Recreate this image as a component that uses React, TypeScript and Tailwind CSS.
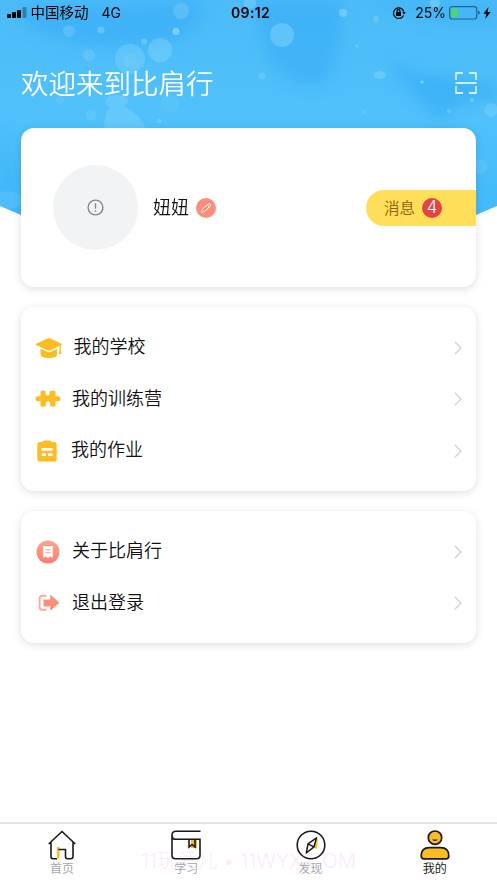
import type { ReactNode } from 'react';

const yellow = '#fbbc24';
const ink = '#1b1b1f';

// soft watercolor wash behind the header
const HeaderArt = () => (
  <svg className="absolute left-0 top-0 h-[216px] w-full" viewBox="0 0 497 216" preserveAspectRatio="none">
    <defs>
      <clipPath id="wave">
        <path d="M0 0H497V206L476 215H21L0 206Z" />
      </clipPath>
      <linearGradient id="sky" x1="0" y1="0" x2="0" y2="1">
        <stop offset="0" stopColor="#4cbcf8" />
        <stop offset="0.55" stopColor="#50c1fa" />
        <stop offset="1" stopColor="#42b9fb" />
      </linearGradient>
      <filter id="soft" x="-30%" y="-30%" width="160%" height="160%">
        <feGaussianBlur stdDeviation="7" />
      </filter>
    </defs>
    <g clipPath="url(#wave)">
      <rect width="497" height="216" fill="url(#sky)" />
      <g filter="url(#soft)" fill="#36acf6">
        <path d="M20 8C60 0 130 12 200 0C208 20 190 42 150 46C100 52 55 42 20 22Z" opacity="0.6" />
        <path d="M252 0H340C346 30 336 60 326 82C304 92 284 76 266 58Z" opacity="0.55" />
        <path d="M385 60C410 74 425 72 497 84V104C470 88 455 112 438 120C422 102 405 86 385 60Z" opacity="0.65" />
        <path d="M370 0H497V26C460 30 410 20 370 0Z" opacity="0.4" />
        <path d="M0 120C8 150 20 170 22 216H0Z" opacity="0.3" />
      </g>
      <g fill="#8ad6fb">
        <circle cx="130" cy="59" r="15" opacity="0.35" />
        <circle cx="130" cy="60" r="7" opacity="0.15" />
        <circle cx="160" cy="50" r="12" opacity="0.4" />
        <path d="M106 103a11 6 0 0 1 22-4q1 4-4 8c10 3 17 11 22 22h-42c0-10 2-18 7-22q-5-1-5-4Z" opacity="0.35" />
        <circle cx="282" cy="35" r="12" opacity="0.45" />
        <circle cx="181" cy="11" r="8" opacity="0.3" />
        <circle cx="176" cy="31.500" r="3.500" opacity="0.8" />
        <circle cx="144" cy="41.500" r="3" opacity="0.5" />
        <circle cx="69" cy="31" r="6" opacity="0.3" />
        <circle cx="101" cy="30" r="3.500" opacity="0.5" />
        <circle cx="89" cy="55" r="6" opacity="0.3" />
        <circle cx="170" cy="103" r="9" opacity="0.15" />
        <circle cx="60" cy="100" r="4.500" opacity="0.2" />
        <circle cx="91" cy="115" r="5.500" opacity="0.2" />
        <circle cx="159" cy="121" r="2.500" opacity="0.5" />
        <circle cx="343" cy="13" r="4" opacity="0.6" />
        <circle cx="376" cy="19" r="3" opacity="0.4" />
        <circle cx="250" cy="3" r="6" opacity="0.4" />
        <circle cx="435" cy="3" r="5" opacity="0.5" />
        <ellipse cx="380" cy="75" rx="6" ry="4" opacity="0.45" />
        <circle cx="262" cy="76" r="3.500" opacity="0.35" />
        <circle cx="422" cy="82" r="1.500" />
        <circle cx="357" cy="46" r="1.500" opacity="0.6" />
        <circle cx="364" cy="112" r="2.500" opacity="0.3" />
        <circle cx="449" cy="111" r="2" opacity="0.5" />
        <circle cx="472" cy="100" r="2" opacity="0.6" />
        <circle cx="491" cy="110" r="7" opacity="0.35" />
        <circle cx="480" cy="167" r="7" opacity="0.2" />
        <ellipse cx="8" cy="200" rx="14" ry="9" opacity="0.2" />
      </g>
    </g>
  </svg>
);

const StatusBar = () => (
  <div className="relative flex h-[26px] items-center text-[14.500px] text-black">
    <svg className="ml-[7px]" width="20" height="12" viewBox="0 0 20 12">
      <rect x="0" y="7" width="4" height="4" rx="1" />
      <rect x="5" y="5" width="4" height="6" rx="1" />
      <rect x="10" y="3" width="4" height="8" rx="1" />
      <rect x="15.500" y="0" width="4" height="11" rx="1" opacity="0.3" />
    </svg>
    <span className="-mt-px ml-[3.500px] leading-none">中国移动</span>
    <span className="-mt-px ml-[13px] font-['Inter'] text-[14px]">4G</span>
    <span className="absolute left-[231px] top-[2px] font-['Inter'] text-[14px] font-semibold tracking-[0.35px]">09:12</span>
    <div className="-mt-px ml-auto flex items-center">
      <svg width="14" height="14" viewBox="0 0 14 14" fill="none" stroke="#000" strokeWidth="1.200">
        <path d="M11.500 9.500A5.300 5.300 0 1 1 11.800 5.500" />
        <path d="M10.200 6h3.600l-1.800 2.500Z" fill="#000" stroke="none" />
        <rect x="4" y="6" width="5" height="4" rx=".5" fill="#000" stroke="none" />
        <path d="M5 6.500V5.200a1.500 1.500 0 0 1 3 0V6.500" />
      </svg>
      <span className="ml-[9px] font-['Inter'] text-[14px]">25%</span>
      <svg className="ml-[3px]" width="32" height="14" viewBox="0 0 32 14">
        <rect x="0.700" y="0.700" width="27" height="12.300" rx="2.500" fill="none" stroke="#25658a" strokeWidth="1.200" />
        <rect x="2.500" y="2.500" width="6" height="8.800" rx="0.800" fill="#4cd964" />
        <path d="M29 4.800q2 .4 2 2t-2 2Z" fill="#25658a" />
      </svg>
      <svg className="ml-[2px] mr-[6px]" width="8" height="12" viewBox="0 0 8 12">
        <path d="M5.500 0L0.500 6.700H3.400L2.200 12L7.600 4.900H4.500Z" />
      </svg>
    </div>
  </div>
);

const CapIcon = () => (
  <svg width="28" height="22" viewBox="0 0 28 22" fill={yellow}>
    <path d="M14 1Q14.500 1 15 1.300L26.500 6.700Q27.500 7.300 26.500 7.900L15 13.400Q14 13.900 13 13.400L1 7.900Q0 7.300 1 6.700L13 1.300Q13.500 1 14 1Z" />
    <path d="M5.500 11.500L12.800 15Q14 15.500 15.200 15L22 11.700V17.500Q22 21 14 21Q5.500 21 5.500 17.500Z" />
    <path d="M24.500 8.500H25.900V13.500L26.800 17H23.600L24.500 13.500Z" />
  </svg>
);

const PuzzleIcon = () => (
  <svg width="26" height="18" viewBox="0 0 26 18" fill={yellow}>
    <path d="M5.500 1.500Q5.500.7 6.300.7H10.500V3.500A2 2 0 0 0 14.700 3.500V.7H19.700Q20.500.7 20.500 1.500V6.200H23A2.500 2.500 0 0 1 23 11.200H20.500V15.700Q20.500 16.500 19.700 16.500H15.200V13.500A2.200 2.200 0 0 0 10.700 13.500V16.500H6.300Q5.500 16.500 5.500 15.700V11.200H3A2.500 2.500 0 0 1 3 6.200H5.500Z" />
  </svg>
);

const ClipboardIcon = () => (
  <svg width="20" height="22" viewBox="0 0 20 22" fill={yellow}>
    <path d="M3 2H5Q6 .4 7.500.4H12.500Q14 .4 15 2H17Q19.700 2 19.700 4.700V18.700Q19.700 21.500 17 21.500H3Q.3 21.500.3 18.700V4.700Q.3 2 3 2Z" />
    <g fill="#fff">
      <rect x="4.500" y="8" width="11" height="2.800" rx="0.600" />
      <rect x="4.500" y="13.200" width="4.500" height="2.800" rx="0.600" />
      <rect x="11" y="13.200" width="4.500" height="2.800" rx="0.600" />
    </g>
  </svg>
);

const AboutIcon = () => (
  <svg width="24" height="24" viewBox="0 0 24 24">
    <defs>
      <linearGradient id="coral" x1="0" y1="0" x2="0" y2="1">
        <stop offset="0" stopColor="#fda491" />
        <stop offset="1" stopColor="#fa7f70" />
      </linearGradient>
    </defs>
    <circle cx="12" cy="12" r="11.500" fill="url(#coral)" />
    <path d="M7.300 6H16.700V17.800L14.300 16.500L12 18L9.700 16.500L7.300 17.800Z" fill="#fff" />
    <path d="M9.500 9.700H14.500M9.500 12.700H14.500" stroke="#fb9482" strokeWidth="1.100" />
  </svg>
);

const LogoutIcon = () => (
  <svg width="22" height="18" viewBox="0 0 22 18">
    <path d="M8.500 1.800H4.500Q1.600 1.800 1.600 4.500V13Q1.600 15.800 4.500 15.800H8.500" fill="none" stroke="#fdab9a" strokeWidth="1.900" />
    <path d="M6.500 5.500H12.200V1.500Q12.300.7 13 1.200L20.700 8.100Q21.400 8.800 20.700 9.500L13 16.300Q12.300 16.700 12.200 16V12.500H6.500Q5.500 12.500 5.500 11.500V6.500Q5.500 5.500 6.500 5.500Z" fill="#fc8f7c" />
  </svg>
);

const Chevron = () => (
  <svg className="ml-auto" width="8" height="14" viewBox="0 0 8 14" fill="none" stroke="#d4d4d6" strokeWidth="1.400">
    <path d="M0.800 0.800L7 7L0.800 13.200" />
  </svg>
);

const HomeIcon = () => (
  <svg width="28" height="30" viewBox="0 0 28 30" fill="none" stroke={ink} strokeWidth="1.600">
    <path d="M10.200 17V28.500" stroke={yellow} strokeWidth="2.600" />
    <path d="M0.700 14L14 1.500L27.300 14M3 12.500V26.500Q3 28.700 5 28.700H9M10.500 19.500H17.500V26.500Q17.500 28.700 19.500 28.700H22.500Q25 28.700 25 26.500V12.500" />
  </svg>
);

const BookIcon = () => (
  <svg width="30" height="30" viewBox="0 0 30 30" fill="none" stroke={ink} strokeWidth="1.600">
    <path d="M20 9.500H26V18H20Z" fill={yellow} stroke="none" />
    <path d="M29.500 1.200H5Q1 1.200 1 5.300T5 9.300H29V25.500Q29 28.700 25.500 28.700H4.300Q1 28.700 1 25.500V5" />
    <path d="M18 9.500V17L21 14.500L24 17V9.500" />
  </svg>
);

const CompassIcon = () => (
  <svg width="30" height="30" viewBox="0 0 30 30" fill="none" stroke={ink} strokeWidth="1.600" strokeLinejoin="round">
    <circle cx="15" cy="15" r="13.800" />
    <path d="M22 8L21 19L16.500 17Z" fill={yellow} stroke="none" />
    <path d="M20.500 7.800L12 13.800L10.300 23L18 16.800ZM12 13.800L18 16.800" strokeWidth="1.500" />
  </svg>
);

const UserIcon = () => (
  <svg width="30" height="30" viewBox="0 0 30 30" fill={yellow} stroke={ink} strokeWidth="1.700">
    <circle cx="15" cy="7.700" r="6.700" />
    <path d="M9.500 17.700H20.500Q28.800 17.700 28.800 26Q28.800 28.900 26 28.900H4Q1.200 28.900 1.200 26Q1.200 17.700 9.500 17.700Z" />
    <path d="M12 9.500Q15 12.500 18 9.500Z" fill={ink} stroke="none" />
  </svg>
);

interface MenuItem {
  label: string;
  icon: ReactNode;
  gap: string;
  iconLeft: string;
}

const learnMenu: MenuItem[] = [
  { label: '我的学校', icon: <CapIcon />, gap: 'pl-[52.500px]', iconLeft: 'left-[14px]' },
  { label: '我的训练营', icon: <PuzzleIcon />, gap: 'pl-[51px]', iconLeft: 'left-[13px]' },
  { label: '我的作业', icon: <ClipboardIcon />, gap: 'pl-[50px]', iconLeft: 'left-[12px]' },
];

const otherMenu: MenuItem[] = [
  { label: '关于比肩行', icon: <AboutIcon />, gap: 'pl-[51px]', iconLeft: 'left-[12.500px]' },
  { label: '退出登录', icon: <LogoutIcon />, gap: 'pl-[51px]', iconLeft: 'left-[14px]' },
];

const tabs = [
  { label: '首页', icon: <HomeIcon /> },
  { label: '学习', icon: <BookIcon /> },
  { label: '发现', icon: <CompassIcon /> },
  { label: '我的', icon: <UserIcon />, active: true },
];

const MenuCard = ({ items, className }: { items: MenuItem[]; className: string }) => (
  <div className={`mx-[21px] rounded-[13px] bg-white shadow-[0_2px_8px_rgba(0,0,0,0.13)] ${className}`}>
    {items.map((item) => (
      <div key={item.label} className={`relative flex h-[51.500px] items-center pr-[14px] ${item.gap}`}>
        <span className={`absolute flex w-7 justify-center ${item.iconLeft}`}>{item.icon}</span>
        <span className="pb-[5px] text-[18px] font-[350] leading-none text-[#111]">{item.label}</span>
        <Chevron />
      </div>
    ))}
  </div>
);

const App = () => {
  return (
    <div className="relative flex h-[883px] w-full flex-col overflow-hidden bg-white font-['Noto_Sans_CJK_SC',sans-serif]">
      <HeaderArt />
      <StatusBar />

      <header className="relative flex h-[102px] items-center justify-between pl-[21px] pr-5 pt-[11px]">
        <h1 className="text-[27.500px] font-[350] leading-none text-white">欢迎来到比肩行</h1>
        <svg width="22" height="22" viewBox="0 0 22 22" fill="none" stroke="#fff" strokeWidth="1.300">
          <path d="M8 1H1V8M14 1H21V8M1 14V21H8M21 14V21H14M0.500 11H21.500" />
        </svg>
      </header>

      <section className="relative mx-[21px] flex h-[159px] items-center rounded-[13px] bg-white pl-8 shadow-[0_2px_8px_rgba(0,0,0,0.13)]">
        <div className="flex size-[85px] items-center justify-center rounded-full bg-[#f2f3f5]">
          <svg width="17" height="17" viewBox="0 0 17 17" fill="none" stroke="#85858c" strokeWidth="1.400">
            <circle cx="8.500" cy="8.500" r="7.400" />
            <path d="M8.500 4.300V9.700M8.500 11.300V12.800" />
          </svg>
        </div>
        <span className="ml-[15px] pb-[3px] text-[18px] font-[350] leading-none text-[#111]">妞妞</span>
        <span className="ml-[7px] flex size-5 items-center justify-center rounded-full bg-[#fc8f7b]">
          <svg width="12" height="12" viewBox="0 0 12 12" fill="none" stroke="#fff" strokeWidth="1">
            <path d="M1.500 10.500L2.500 7.200L8 2Q9 1 10.200 2T10 4.200L4.800 9.400ZM7.200 2.800L9.300 4.900" />
          </svg>
        </span>
        <div className="ml-auto flex h-9 w-[110px] items-center rounded-l-full bg-[#ffde5a] pl-[18px]">
          <span className="text-[15.500px] font-[350] leading-none text-[#8a6208]">消息</span>
          <span className="ml-[7px] flex size-5 items-center justify-center rounded-full bg-[#e34441] font-['Inter'] text-[17px] font-light leading-none text-white">
            4
          </span>
        </div>
      </section>

      <MenuCard items={learnMenu} className="mt-5 h-[184px] pt-[15px]" />
      <MenuCard items={otherMenu} className="mt-5 h-[132px] pt-[15px]" />

      <nav className="relative mt-auto flex h-[61px] border-t-2 border-[#e4e4e4] bg-white">
        <span className="absolute left-[141px] top-[25px] whitespace-nowrap font-['Inter','Noto_Sans_CJK_SC',sans-serif] text-[20px] font-light leading-6 tracking-[0.16px] text-[#fbebf9]">
          11玩意儿 • 11WYX.COM
        </span>
        {tabs.map((tab) => (
          <div key={tab.label} className="relative flex flex-1 flex-col items-center pt-[6px]">
            {tab.icon}
            <span className={`mt-px text-[12px] leading-[14px] ${tab.active ? 'text-[#1a1a1a]' : 'text-[#a6a7b0]'}`}>
              {tab.label}
            </span>
          </div>
        ))}
      </nav>
    </div>
  );
};

export default App;
